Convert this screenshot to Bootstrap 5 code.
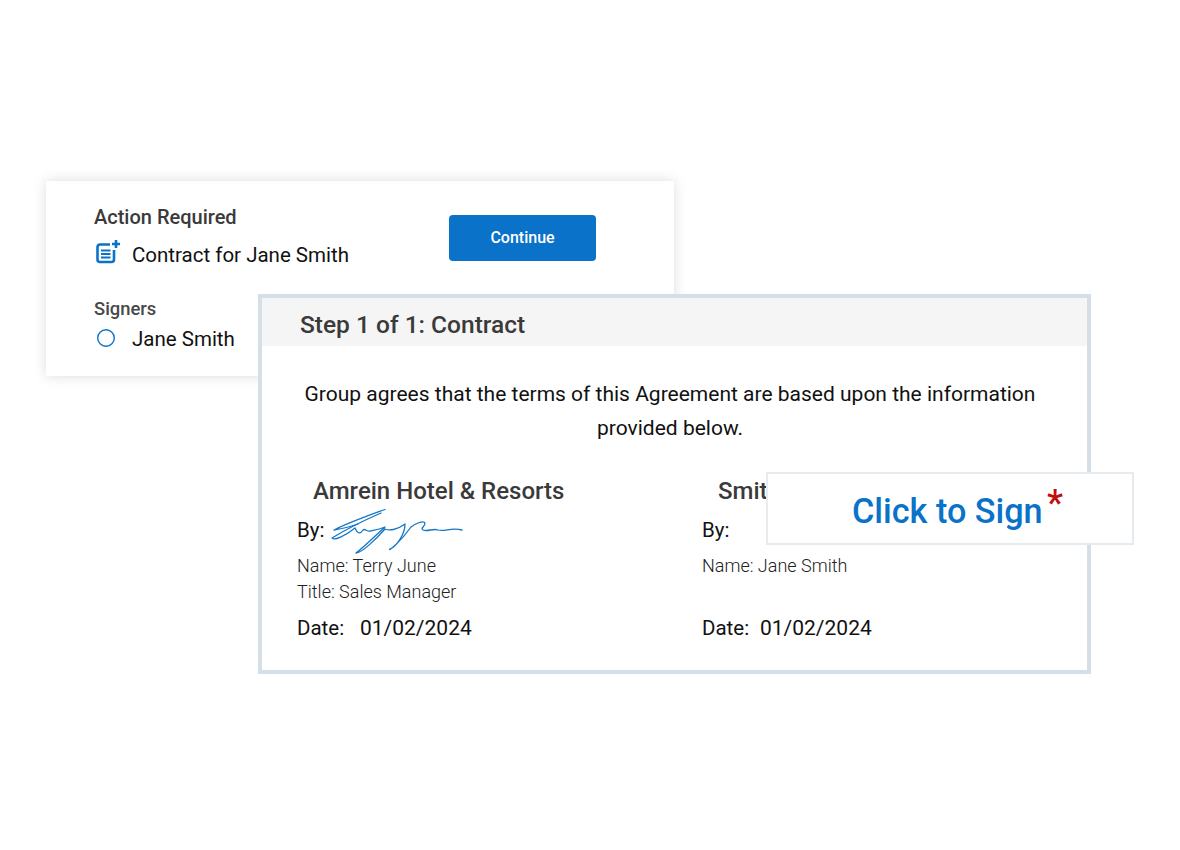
<!DOCTYPE html>
<html lang="en">
<head>
  <meta charset="UTF-8" />
  <meta name="viewport" content="width=device-width, initial-scale=1.0"/>
  <title>Click to Sign</title>
  <link href="https://cdn.jsdelivr.net/npm/bootstrap@5.3.0/dist/css/bootstrap.min.css" rel="stylesheet"/>
  <style>
    html, body { background: #fff; }
    body { font-family: Roboto, "Liberation Sans", sans-serif; color: #000; width: 1180px; height: 850px; overflow: hidden; }
    .stage { position: relative; width: 1180px; height: 850px; }
    .action-panel { position: absolute; left: 46px; top: 181px; width: 628px; height: 195px; padding: 24px 78px 0 48px; box-shadow: 0 0 12px rgba(0,0,0,.14); background: #fff; }
    .panel-head { font-size: 20px; font-weight: 500; color: #3a3a3a; line-height: 24px; margin-bottom: 13px; }
    .panel-sub { font-size: 18.4px; font-weight: 500; color: #484848; line-height: 22px; margin-top: 30px; margin-bottom: 6px; }
    .panel-line { font-size: 20.5px; line-height: 26px; color: #111; }
    .icon-slot { width: 38px; flex: none; }
    .doc-icon { display: block; margin: -6px 0 0 2px; }
    .ring-icon { display: block; margin-top: -2px; }
    .btn-continue { width: 147px; height: 46px; margin-top: 10px; background: #0a72c9; color: #fff; border: 0; border-radius: 4px; font-size: 16px; font-weight: 500; }
    .contract-sheet { position: absolute; left: 258px; top: 294px; width: 833px; height: 380px; border: 4px solid #d5dfe8; background: #fff; }
    .sheet-head { height: 48px; background: #f5f5f5; padding-left: 38px; font-size: 24.5px; font-weight: 500; color: #3a3a3a; line-height: 54px; }
    .sheet-text { padding: 31px 35px 0 26px; font-size: 21px; line-height: 34px; text-align: center; color: #111; }
    .sign-cols { padding-left: 35px; margin-top: 31px; }
    .sign-col { width: 405px; flex: none; }
    .org-name { font-size: 24px; font-weight: 500; color: #3a3a3a; line-height: 30px; padding-left: 16px; }
    .by-line { font-size: 20.5px; line-height: 26px; color: #111; height: 47px; padding-top: 11px; position: relative; }
    .meta-line { font-size: 18px; font-weight: 300; color: #222; line-height: 26px; }
    .date-line { font-size: 20.5px; color: #111; line-height: 26px; margin-top: 10px; }
    .date-value { font-size: 21px; }
    .date-key-a { width: 63px; }
    .date-key-b { width: 58px; }
    .sign-box { position: absolute; left: 766px; top: 472px; width: 368px; height: 73px; background: #fff; border: 2px solid #e6ebf0; padding-left: 84px; font-size: 34.2px; font-weight: 500; color: #0a72c9; line-height: 74px; }
    .sign-star { position: absolute; left: 279px; top: 9px; color: #c00d0d; font-size: 36px; line-height: 40px; }
    .sig-mark { position: absolute; left: 28px; top: -6px; }
  </style>
</head>
<body>
  <div class="stage">
    <div class="action-panel d-flex justify-content-between">
      <div>
        <div class="panel-head">Action Required</div>
        <div class="panel-line d-flex align-items-center">
          <div class="icon-slot">
            <svg class="doc-icon" width="24" height="24" viewBox="0 0 24 24" fill="none" stroke="#0a72c9">
              <path d="M14 4.5H4a2.5 2.5 0 0 0-2.5 2.5V19.500a2.500 2.500 0 0 0 2.500 2.500h11.500a2.500 2.500 0 0 0 2.500-2.500V10" stroke-width="2.600"/>
              <path d="M5 10.500h9.500M5 14h9.500M5 17.500h9.500" stroke-width="2.200"/>
              <path d="M20 0v8M16 4h8" stroke-width="2.600"/>
            </svg>
          </div>
          <span>Contract for Jane Smith</span>
        </div>
        <div class="panel-sub">Signers</div>
        <div class="panel-line d-flex align-items-center">
          <div class="icon-slot">
            <svg class="ring-icon" width="24" height="24" viewBox="0 0 24 24" fill="none" stroke="#0a72c9" stroke-width="1.400"><circle cx="12" cy="12" r="8.300"/></svg>
          </div>
          <span>Jane Smith</span>
        </div>
      </div>
      <div><button class="btn btn-continue" type="button">Continue</button></div>
    </div>

    <div class="contract-sheet">
      <div class="sheet-head">Step 1 of 1: Contract</div>
      <div class="sheet-text">Group agrees that the terms of this Agreement are based upon the information provided below.</div>
      <div class="sign-cols d-flex">
        <div class="sign-col">
          <div class="org-name">Amrein Hotel &amp; Resorts</div>
          <div class="by-line">By:
            <svg class="sig-mark" width="145" height="60" viewBox="0 0 145 60" fill="none" stroke="#1477c8" stroke-width="1.300" stroke-linecap="round" stroke-linejoin="round">
              <path d="M60 9.500C45 15 25 22 9 30C16 29 24 27 33 24"/>
              <path d="M56 13C40 20 20 30 7 38C9 41 20 36 30 28C32 33 35 35 38 30C40 28 42 32 45 31C49 30 52 30 60 27C50 36 40 46 31 53C37 53 52 38 60 29C64 31 72 30 80 24C80 34 72 46 65 49C62 52 74 44 86 27C89 24 99 20 100 23C100 27 95 28 98 30C103 32 108 28 113 30C120 32 126 27 137 30"/>
            </svg>
          </div>
          <div class="meta-line">Name: Terry June</div>
          <div class="meta-line">Title: Sales Manager</div>
          <div class="date-line d-flex"><span class="date-key-a">Date:</span><span class="date-value">01/02/2024</span></div>
        </div>
        <div class="sign-col">
          <div class="org-name">Smith Group</div>
          <div class="by-line">By:</div>
          <div class="meta-line">Name: Jane Smith</div>
          <div class="meta-line">&nbsp;</div>
          <div class="date-line d-flex"><span class="date-key-b">Date:</span><span class="date-value">01/02/2024</span></div>
        </div>
      </div>
    </div>

    <div class="sign-box">Click to Sign<span class="sign-star">*</span></div>
  </div>
  <script src="https://cdn.jsdelivr.net/npm/bootstrap@5.3.0/dist/js/bootstrap.bundle.min.js"></script>
</body>
</html>
